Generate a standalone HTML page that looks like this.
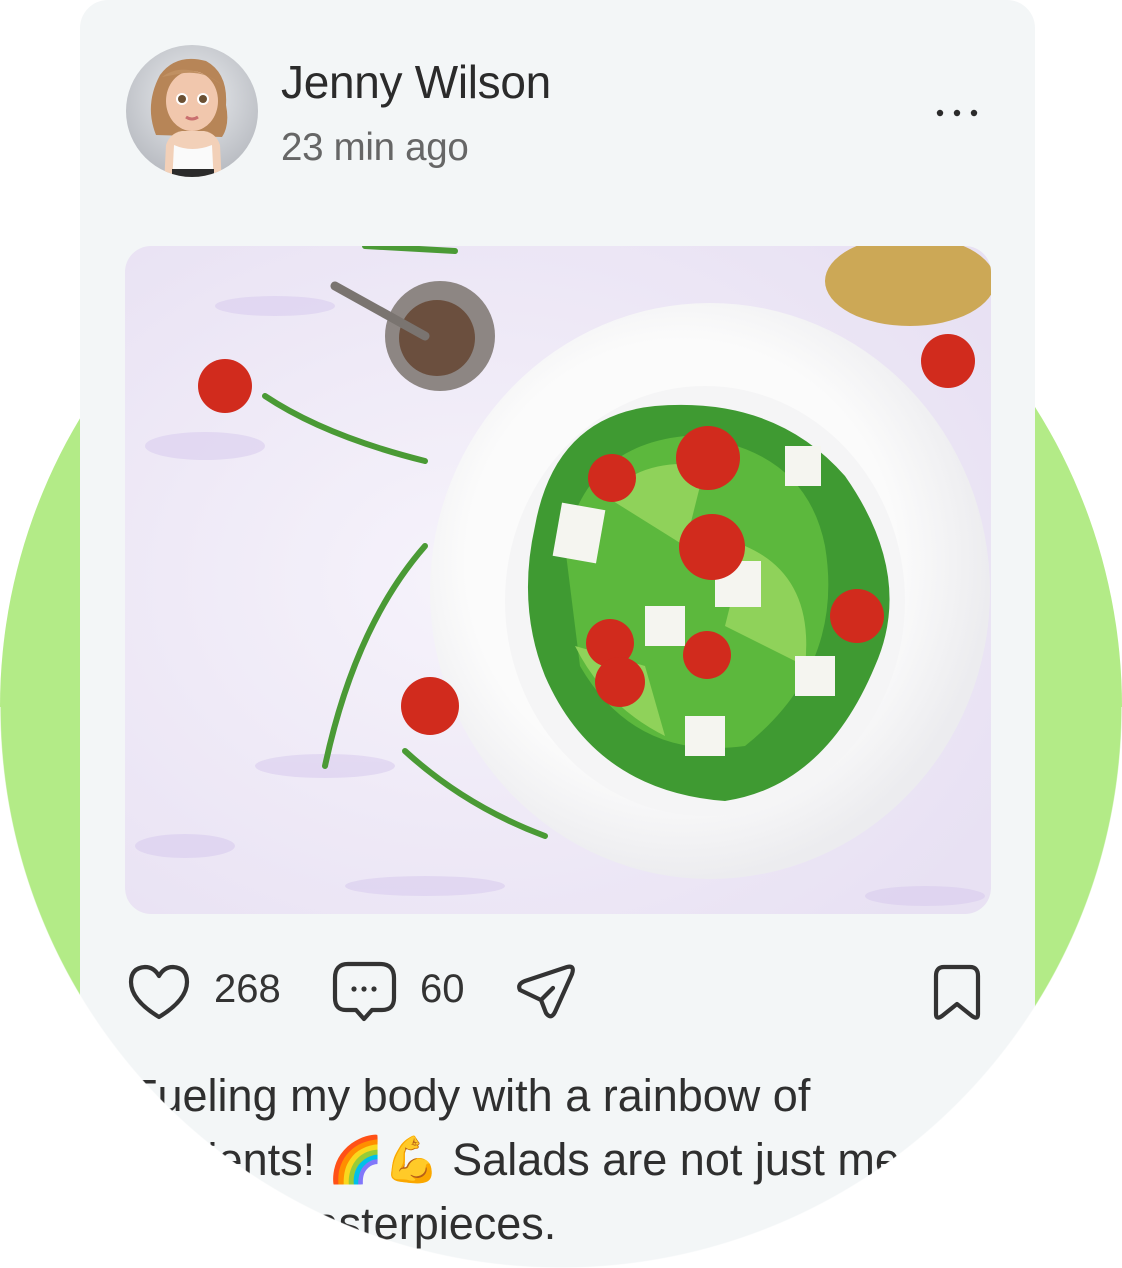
<!DOCTYPE html>
<html><head><meta charset="utf-8"><style>
html,body{margin:0;padding:0;background:#fff;}
body{width:1122px;height:1268px;position:relative;overflow:hidden;font-family:"Liberation Sans","Noto Sans CJK SC",sans-serif;}
.green{position:absolute;left:0;top:146px;width:1122px;height:1122px;border-radius:50%;background:#b3eb87;}
.card{position:absolute;left:80px;top:0;width:955px;height:1268px;background:#f3f6f7;border-radius:28px;}
.mask{position:absolute;left:0;top:707px;width:1122px;height:561px;background:radial-gradient(circle 561px at 561px 0px,transparent 560px,#fff 561px);}
.abs{position:absolute;}
.name{left:281px;top:55px;font-size:46px;color:#2b2b2b;letter-spacing:-0.3px;}
.time{left:281px;top:126px;font-size:38.5px;color:#666;letter-spacing:-0.3px;}
.num{font-size:40px;color:#333;top:967px;}
.txt{left:130px;top:1064px;font-size:45px;line-height:64px;color:#2f2f2f;width:1000px;white-space:nowrap;}
</style></head><body>
<div class="green"></div>
<div class="card"></div>

<svg class="abs" style="left:126px;top:45px" width="132" height="132" viewBox="0 0 132 132">
<defs><radialGradient id="av" cx="50%" cy="40%" r="60%"><stop offset="0" stop-color="#eceef1"/><stop offset="1" stop-color="#b9bcc2"/></radialGradient><clipPath id="ac"><circle cx="66" cy="66" r="66"/></clipPath></defs>
<circle cx="66" cy="66" r="66" fill="url(#av)"/>
<g clip-path="url(#ac)">
<path d="M30 90 Q18 60 34 30 Q50 8 80 16 Q102 28 100 60 Q104 80 96 92 Z" fill="#b78557"/>
<ellipse cx="66" cy="56" rx="26" ry="30" fill="#f1c7ad"/>
<circle cx="56" cy="54" r="6" fill="#fff"/><circle cx="56" cy="54" r="4" fill="#6b5033"/>
<circle cx="77" cy="54" r="6" fill="#fff"/><circle cx="77" cy="54" r="4" fill="#6b5033"/>
<path d="M60 72 Q66 76 72 72" stroke="#c96f6f" stroke-width="3" fill="none"/>
<path d="M36 32 Q60 14 96 40 Q80 26 58 28 Z" fill="#c09062"/>
<path d="M38 140 L40 100 Q44 88 56 86 L78 86 Q90 88 94 100 L96 140 Z" fill="#f2d0b8"/>
<path d="M46 140 L48 100 Q66 108 86 100 L88 140 Z" fill="#fafafa"/>
<rect x="46" y="124" width="42" height="8" fill="#2b2b2b"/>
</g></svg>
<div class="abs name">Jenny Wilson</div>
<div class="abs time">23 min ago</div>
<svg class="abs" style="left:930px;top:105px" width="50" height="16"><circle cx="10" cy="8" r="3.2" fill="#2b2b2b"/><circle cx="27" cy="8" r="3.2" fill="#2b2b2b"/><circle cx="44" cy="8" r="3.2" fill="#2b2b2b"/></svg>

<svg class="abs" style="left:125px;top:246px" width="866" height="668" viewBox="0 0 866 668">
<defs><clipPath id="pc"><rect width="866" height="668" rx="26"/></clipPath>
<radialGradient id="bg" cx="40%" cy="50%" r="70%"><stop offset="0" stop-color="#f6f3fb"/><stop offset="1" stop-color="#e8e1f3"/></radialGradient>
<radialGradient id="bowl" cx="45%" cy="45%" r="55%"><stop offset="0.7" stop-color="#fbfbfb"/><stop offset="1" stop-color="#ececef"/></radialGradient>
</defs>
<g clip-path="url(#pc)">
<rect width="866" height="668" fill="url(#bg)"/>
<g fill="#d6c8ee" opacity="0.5"><ellipse cx="80" cy="200" rx="60" ry="14"/><ellipse cx="200" cy="520" rx="70" ry="12"/><ellipse cx="60" cy="600" rx="50" ry="12"/><ellipse cx="300" cy="640" rx="80" ry="10"/><ellipse cx="800" cy="650" rx="60" ry="10"/><ellipse cx="150" cy="60" rx="60" ry="10"/></g>
<ellipse cx="585" cy="345" rx="280" ry="288" fill="url(#bowl)"/>
<ellipse cx="580" cy="355" rx="200" ry="215" fill="#f5f5f6"/>
<path d="M410 280 Q430 170 530 160 Q650 150 720 230 Q790 330 750 420 Q700 540 600 555 Q470 545 420 430 Q392 360 410 280Z" fill="#3f9a32"/>
<path d="M440 300 Q460 200 560 190 Q680 200 700 300 Q720 420 620 500 Q510 515 455 420Z" fill="#5cb83d"/>
<path d="M480 250 Q520 210 580 220 L560 300 Z M620 300 Q690 330 680 420 L600 380Z M450 400 Q480 460 540 490 L520 420Z" fill="#8fd25a"/>
<g fill="#f5f5f0"><rect x="432" y="260" width="44" height="54" transform="rotate(10 454 287)"/><rect x="660" y="200" width="36" height="40"/><rect x="590" y="315" width="46" height="46"/><rect x="670" y="410" width="40" height="40"/><rect x="560" y="470" width="40" height="40"/><rect x="520" y="360" width="40" height="40"/></g>
<g fill="#d12b1d"><circle cx="583" cy="212" r="32"/><circle cx="487" cy="232" r="24"/><circle cx="587" cy="301" r="33"/><circle cx="732" cy="370" r="27"/><circle cx="485" cy="397" r="24"/><circle cx="495" cy="436" r="25"/><circle cx="582" cy="409" r="24"/><circle cx="100" cy="140" r="27"/><circle cx="305" cy="460" r="29"/><circle cx="823" cy="115" r="27"/></g>
<ellipse cx="785" cy="35" rx="85" ry="45" fill="#c79d3a" opacity="0.85"/>
<circle cx="315" cy="90" r="55" fill="#8d8683"/><circle cx="312" cy="92" r="38" fill="#6b4f3e"/>
<path d="M210 40 L300 90" stroke="#7a7470" stroke-width="9" stroke-linecap="round"/>
<g stroke="#4a9a35" stroke-width="6" fill="none" stroke-linecap="round"><path d="M140 150 Q200 190 300 215"/><path d="M300 300 Q230 380 200 520"/><path d="M280 505 Q340 560 420 590"/><path d="M240 0 L330 5"/></g>
</g></svg>

<svg class="abs" style="left:127px;top:962px" width="64" height="60" viewBox="0 0 64 60"><path d="M32 55 Q4 38 4 20 Q4 6 18 5 Q27 5 32 14 Q37 5 46 5 Q60 6 60 20 Q60 38 32 55Z" fill="none" stroke="#333" stroke-width="4.2" stroke-linejoin="round"/></svg>
<div class="abs num" style="left:214px">268</div>
<svg class="abs" style="left:330px;top:960px" width="68" height="64" viewBox="0 0 68 64"><path d="M18 4 H50 Q64 4 64 18 V38 Q64 50 52 50 H42 L34 59 L26 50 H16 Q5 50 5 38 V18 Q5 4 18 4Z" fill="none" stroke="#333" stroke-width="4.2" stroke-linejoin="round"/><circle cx="24" cy="29" r="2.6" fill="#333"/><circle cx="34" cy="29" r="2.6" fill="#333"/><circle cx="44" cy="29" r="2.6" fill="#333"/></svg>
<div class="abs num" style="left:420px">60</div>
<svg class="abs" style="left:515px;top:962px" width="64" height="60" viewBox="0 0 64 60"><path d="M5 28 Q2 22 10 19 L52 5 Q60 3 57 12 L40 50 Q36 58 31 51 L26 38 Z" fill="none" stroke="#333" stroke-width="4.2" stroke-linejoin="round"/><path d="M26 38 L38 26" stroke="#333" stroke-width="4.2" stroke-linecap="round"/></svg>
<svg class="abs" style="left:932px;top:964px" width="50" height="58" viewBox="0 0 50 58"><path d="M12 3 H38 Q46 3 46 12 V50 Q46 56 40 52 L25 40 L10 52 Q4 56 4 50 V12 Q4 3 12 3Z" fill="none" stroke="#333" stroke-width="4.2" stroke-linejoin="round"/></svg>

<div class="abs txt">Fueling my body with a rainbow of<br>nutrients! 🌈💪 Salads are not just meals,<br>they're masterpieces.</div>
<div class="mask"></div>
</body></html>
